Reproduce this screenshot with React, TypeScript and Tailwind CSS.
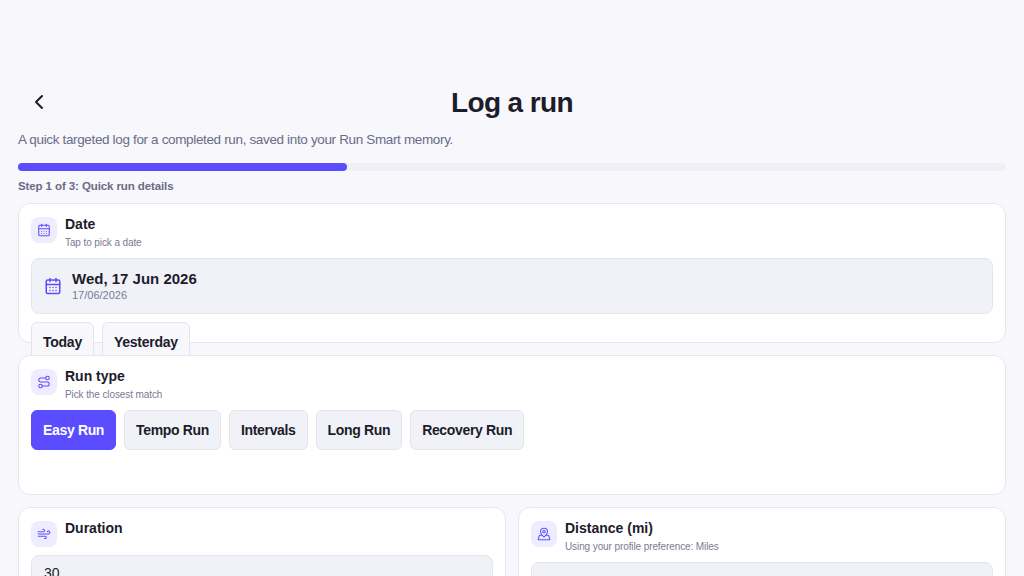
import { CalendarDays, ChevronLeft, MapPinned, Route, Wind } from "lucide-react";
import type { ReactNode } from "react";

const runTypes = ["Easy Run", "Tempo Run", "Intervals", "Long Run", "Recovery Run"];

const CardHeader = ({ icon, title, sub }: { icon: ReactNode; title: string; sub?: string }) => (
  <div className="flex items-start gap-2">
    <div className="flex h-[26px] w-[26px] shrink-0 items-center justify-center rounded-lg bg-[#eeecfe] text-[#5b4dff]">
      {icon}
    </div>
    <div className="-mt-[1px]">
      <div className="text-[14px] leading-[16px] font-bold text-[#1c1c2b]">{title}</div>
      {sub && <div className="mt-[4px] text-[10px] leading-[14px] tracking-[-0.1px] text-[#7a7a96]">{sub}</div>}
    </div>
  </div>
);

const Chip = ({ label, active }: { label: string; active?: boolean }) => (
  <button
    className={
      active
        ? "h-10 rounded-md border border-[#5b4dff] bg-[#5b4dff] px-[11px] text-[14px] font-bold tracking-[-0.34px] text-white"
        : "h-10 rounded-md border border-[#e4e4ef] bg-[#f1f2f7] px-[11px] text-[14px] font-bold tracking-[-0.34px] text-[#1c1c2b]"
    }
  >
    {label}
  </button>
);

export default function App() {
  return (
    <div className="h-[576px] overflow-hidden bg-[#f7f7fc] px-[18px] pt-[84px] font-['Liberation_Sans',sans-serif]">
      <div className="relative flex h-9 items-center justify-center">
        <ChevronLeft className="absolute left-[9px] top-[6px] h-6 w-6 text-[#1c1c2b]" strokeWidth={2} />
        <h1 className="pt-[1px] text-[28px] leading-9 font-bold tracking-[-0.6px] text-[#1c1c2b]">Log a run</h1>
      </div>

      <p className="mt-[10px] text-[13.5px] leading-5 tracking-[-0.35px] text-[#6b6b87]">
        A quick targeted log for a completed run, saved into your Run Smart memory.
      </p>

      <div className="mt-[13px] h-2 rounded-full bg-[#f0f1f7]">
        <div className="h-2 w-1/3 rounded-full bg-[#5b4dff]" />
      </div>
      <p className="mt-[7px] text-[11.5px] leading-4 font-bold tracking-[-0.1px] text-[#6b6b87]">
        Step 1 of 3: Quick run details
      </p>

      <div className="mt-[9px] flex flex-col gap-3">
        <section className="h-[140px] rounded-xl border border-[#e6e6f0] bg-white px-3 pt-[13px]">
          <CardHeader
            icon={<CalendarDays className="h-[14px] w-[14px]" strokeWidth={1.8} />}
            title="Date"
            sub="Tap to pick a date"
          />
          <div className="mt-2 flex h-14 items-center gap-[10px] rounded-lg border border-[#e4e4ef] bg-[#f1f2f7] px-3">
            <CalendarDays className="h-[18px] w-[18px] text-[#5b4dff]" />
            <div>
              <div className="text-[15px] leading-[18px] font-bold text-[#1c1c2b]">Wed, 17 Jun 2026</div>
              <div className="text-[11px] leading-[14px] text-[#7a7a96]">17/06/2026</div>
            </div>
          </div>
          <div className="mt-2 flex gap-2">
            <button className="h-10 rounded-md border border-[#e4e4ef] bg-[#f7f7fc] px-[11px] text-[14px] font-bold tracking-[-0.25px] text-[#1c1c2b]">
              Today
            </button>
            <button className="h-10 rounded-md border border-[#e4e4ef] bg-[#f7f7fc] px-[11px] text-[14px] font-bold tracking-[-0.25px] text-[#1c1c2b]">
              Yesterday
            </button>
          </div>
        </section>

        <section className="relative h-[140px] rounded-xl border border-[#e6e6f0] bg-white px-3 pt-[13px]">
          <CardHeader
            icon={<Route className="h-[14px] w-[14px]" strokeWidth={1.8} />}
            title="Run type"
            sub="Pick the closest match"
          />
          <div className="mt-2 flex gap-2">
            {runTypes.map((t, i) => (
              <Chip key={t} label={t} active={i === 0} />
            ))}
          </div>
        </section>

        <div className="grid grid-cols-2 gap-3">
          <section className="h-[140px] rounded-xl border border-[#e6e6f0] bg-white px-3 pt-[13px]">
            <CardHeader icon={<Wind className="h-[14px] w-[14px]" strokeWidth={1.8} />} title="Duration" />
            <div className="mt-2 h-14 rounded-lg border border-[#e4e4ef] bg-[#f1f2f7] px-3 pt-[7px] text-[14px] leading-5 text-[#1c1c2b]">
              30
            </div>
          </section>
          <section className="h-[140px] rounded-xl border border-[#e6e6f0] bg-white px-3 pt-[13px]">
            <CardHeader
              icon={<MapPinned className="h-[14px] w-[14px]" strokeWidth={1.8} />}
              title="Distance (mi)"
              sub="Using your profile preference: Miles"
            />
            <div className="mt-2 h-14 rounded-lg border border-[#e4e4ef] bg-[#f1f2f7]" />
          </section>
        </div>
      </div>
    </div>
  );
}
